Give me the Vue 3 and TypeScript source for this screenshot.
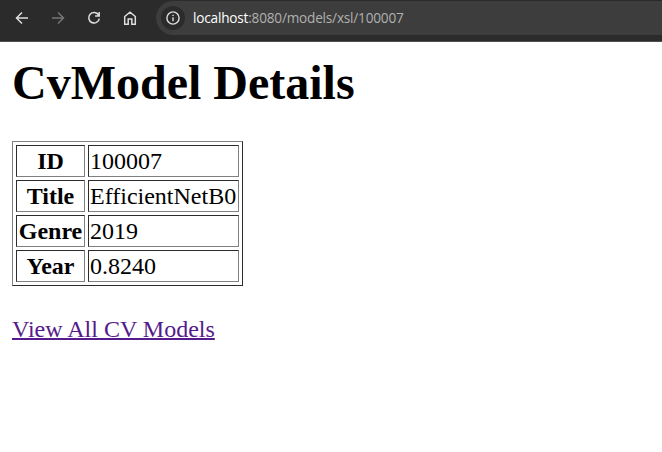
<script setup lang="ts">
interface Row {
  label: string
  value: string
}

const rows: Row[] = [
  { label: 'ID', value: '100007' },
  { label: 'Title', value: 'EfficientNetB0' },
  { label: 'Genre', value: '2019' },
  { label: 'Year', value: '0.8240' },
]
</script>

<template>
  <div class="window">
    <header class="toolbar">
      <nav class="nav">
        <svg class="icon" viewBox="0 0 16 16"><path d="M14 8H3M8 2.5L2.5 8L8 13.5" /></svg>
        <svg class="icon disabled" viewBox="0 0 16 16"><path d="M2 8H13M8 2.5L13.5 8L8 13.5" /></svg>
        <svg class="icon" viewBox="0 0 16 16"><path d="M12.6 5A5.3 5.3 0 1 0 13.3 8.6M13.2 2V6.1H9.1" /></svg>
        <svg class="icon" viewBox="0 0 16 16"><path d="M2.7 14.2V6.5L8 2.2L13.3 6.5V14.2H9.8V9H6.2V14.2Z" /></svg>
      </nav>
      <div class="address">
        <span class="site-info">
          <svg class="icon info" viewBox="0 0 16 16">
            <circle cx="8" cy="8" r="6.1" />
            <path d="M8 7.3V11.2M8 4.7V6" />
          </svg>
        </span>
        <span class="url"><span class="host">localhost</span>:8080/models/xsl/100007</span>
      </div>
    </header>
    <main class="page">
      <h1>CvModel Details</h1>
      <table>
        <tbody>
          <tr v-for="row in rows" :key="row.label">
            <th>{{ row.label }}</th>
            <td>{{ row.value }}</td>
          </tr>
        </tbody>
      </table>
      <a href="#">View All CV Models</a>
    </main>
  </div>
</template>

<style>
body {
  margin: 0;
  background: #fff;
}
</style>

<style scoped>
.window {
  height: 452px;
  overflow: hidden;
}
.toolbar {
  box-sizing: border-box;
  display: flex;
  height: 42px;
  padding-top: 1px;
  background: #2b2b2b;
  border-bottom: 1px solid #505050;
}
.nav {
  display: flex;
  gap: 20px;
  width: 142px;
  height: 34px;
  padding-left: 14px;
  align-items: center;
}
.icon {
  display: block;
  width: 16px;
  height: 16px;
  flex: none;
  fill: none;
  stroke: #dedede;
  stroke-width: 1.5;
}
.disabled {
  stroke: #757575;
}
.address {
  display: flex;
  flex: 1;
  align-items: center;
  height: 34px;
  background: #3d3d3d;
  border-radius: 17px 0 0 17px;
}
.site-info {
  display: flex;
  align-items: center;
  justify-content: center;
  width: 24px;
  height: 24px;
  margin-left: 5px;
  background: #2b2b2b;
  border-radius: 50%;
}
.info {
  stroke-width: 1.4;
}
.url {
  margin-left: 8px;
  color: #b0b0b0;
  font: 13.6px/20px "Open Sans", "Noto Sans", sans-serif;
  letter-spacing: -0.2px;
  white-space: nowrap;
}
.host {
  color: #fff;
  font-weight: 500;
  letter-spacing: -0.19px;
}
.page {
  padding: 13px 12px 12px;
  color: #000;
  font: 24px/27px "Liberation Serif", "Times New Roman", serif;
}
h1 {
  margin: 0 0 31px;
  font-size: 48px;
  line-height: 55px;
}
table {
  box-sizing: border-box;
  table-layout: fixed;
  width: 231px;
  margin-bottom: 30px;
  border: 1px solid;
  border-color: #808080 #2c2c2c #2c2c2c #808080;
  border-collapse: separate;
  border-spacing: 3px;
}
th,
td {
  box-sizing: border-box;
  height: 32px;
  padding: 1px;
  border: 1px solid;
  border-color: #2c2c2c #808080 #808080 #2c2c2c;
  white-space: nowrap;
}
th {
  width: 69px;
  text-align: center;
}
a {
  color: #551a8b;
  text-decoration: underline;
  text-decoration-thickness: 2px;
}
</style>
